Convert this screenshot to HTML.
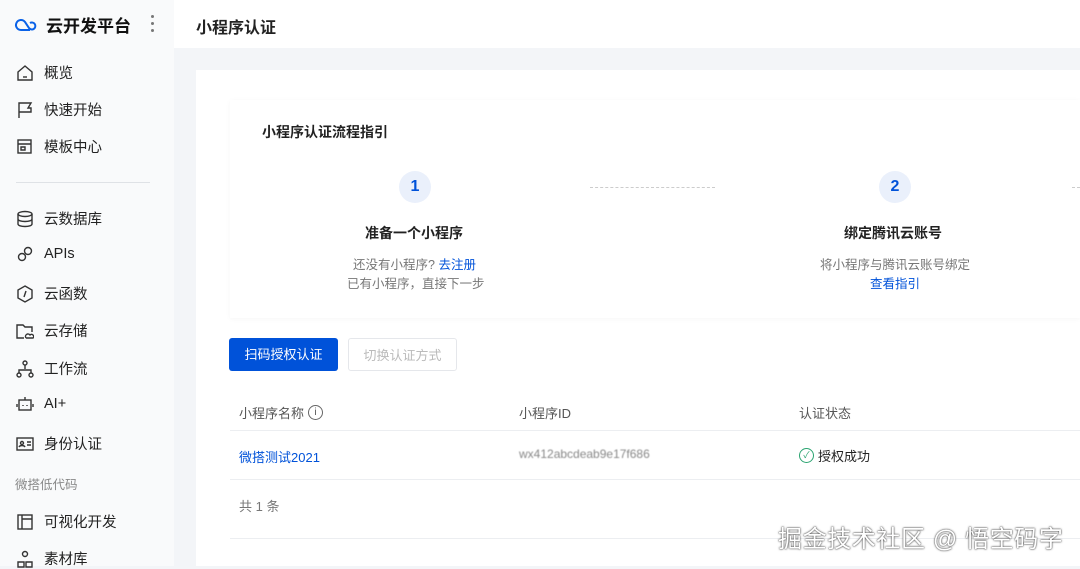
<!DOCTYPE html>
<html><head><meta charset="utf-8"><style>
*{margin:0;padding:0;box-sizing:border-box}
body{width:1080px;height:566px;overflow:hidden;font-family:"Liberation Sans","Noto Sans CJK SC",sans-serif;background:#f3f5f8;position:relative;color:#222}
.side{position:absolute;left:0;top:0;width:174px;height:566px;background:#f9fafb}
.logo{position:absolute;left:14px;top:12px;font-size:17px;font-weight:bold;color:#111;display:flex;align-items:center;gap:8px}
.dots{position:absolute;left:151px;top:15px;width:4px}
.dots i{display:block;width:3px;height:3px;background:#777;border-radius:50%;margin-bottom:4px}
.item{position:absolute;left:16px;font-size:14.5px;color:#222;display:flex;align-items:center;gap:10px}
.item svg{width:18px;height:18px;stroke:#333;fill:none;stroke-width:1.4}
.hr{position:absolute;left:16px;top:182px;width:134px;height:1px;background:#dfe2e6}
.grp{position:absolute;left:15px;top:474px;font-size:12.5px;color:#888}
.top{position:absolute;left:174px;top:0;width:906px;height:48px;background:#fff}
.top span{position:absolute;left:22px;top:14px;font-size:16px;font-weight:bold}
.card{position:absolute;left:196px;top:70px;width:884px;height:496px;background:#fff}
.steps{position:absolute;left:230px;top:100px;width:850px;height:218px;background:#fff;box-shadow:0 1px 5px rgba(0,0,0,.04)}
.t{position:absolute;font-size:14px}
.circ{position:absolute;width:32px;height:32px;border-radius:50%;background:#eaf0fb;color:#0052d9;font-size:16px;font-weight:bold;text-align:center;line-height:32px}
.dash{position:absolute;top:187px;height:0;border-top:1px dashed #ccc}
.btn{position:absolute;top:338px;height:33px;font-size:13px;line-height:33px;text-align:center;border-radius:3px}
.th{position:absolute;top:403px;font-size:13px;color:#555;display:flex;align-items:center;gap:4px}
.line{position:absolute;left:230px;width:850px;height:1px;background:#eceef1}
</style></head><body>
<div class="side">
<div class="logo"><svg width="24" height="16" viewBox="0 0 24 16" fill="none" stroke="#0a62e8" stroke-width="2"><path d="M7 13a5 5 0 1 1 4-8l4 6a3.5 3.5 0 1 0 1-5"/><path d="M7 13h9"/></svg>云开发平台</div>
<div class="dots"><i></i><i></i><i></i></div>
<div class="item" style="top:62px"><svg viewBox="0 0 18 18"><path d="M2 8l7-6 7 6v8H2z"/><path d="M7 13h4"/></svg>概览</div>
<div class="item" style="top:99px"><svg viewBox="0 0 18 18"><path d="M3 17V2h12l-3 5h3v4H3"/></svg>快速开始</div>
<div class="item" style="top:136px"><svg viewBox="0 0 18 18"><rect x="2" y="2" width="13" height="13"/><path d="M2 6h13M5 9h4v3H5z"/></svg>模板中心</div>
<div class="hr"></div>
<div class="item" style="top:208px"><svg viewBox="0 0 18 18"><ellipse cx="9" cy="4" rx="7" ry="2.5"/><path d="M2 4v10c0 1.5 3 2.5 7 2.5s7-1 7-2.5V4M2 9c0 1.5 3 2.5 7 2.5s7-1 7-2.5"/></svg>云数据库</div>
<div class="item" style="top:245px"><svg viewBox="0 0 18 18"><circle cx="6" cy="12" r="3.5"/><circle cx="12" cy="6" r="3.5"/></svg>APIs</div>
<div class="item" style="top:283px"><svg viewBox="0 0 18 18"><path d="M9 1l7 4v8l-7 4-7-4V5z"/><path d="M10 6l-2 6"/></svg>云函数</div>
<div class="item" style="top:320px"><svg viewBox="0 0 18 18"><path d="M8 16H1V3h6l2 2h7v5"/><path d="M10 16h7a2 2 0 0 0-3-3 2 2 0 0 0-4 3"/></svg>云存储</div>
<div class="item" style="top:358px"><svg viewBox="0 0 18 18"><circle cx="9" cy="3" r="2"/><circle cx="3" cy="15" r="2"/><circle cx="15" cy="15" r="2"/><path d="M9 5v4M3 13v-3h12v3"/></svg>工作流</div>
<div class="item" style="top:395px"><svg viewBox="0 0 18 18"><rect x="3" y="5" width="12" height="10"/><path d="M9 2v3M1 9v3M17 9v3M7 10v1M11 10v1"/></svg>AI+</div>
<div class="item" style="top:433px"><svg viewBox="0 0 18 18"><rect x="1" y="3" width="16" height="12"/><circle cx="6" cy="8" r="1.5"/><path d="M3 12c1-2 5-2 6 0M11 7h4M11 10h4"/></svg>身份认证</div>
<div class="grp">微搭低代码</div>
<div class="item" style="top:511px"><svg viewBox="0 0 18 18"><rect x="2" y="2" width="14" height="14"/><path d="M6 2v14M6 6h10"/></svg>可视化开发</div>
<div class="item" style="top:548px"><svg viewBox="0 0 18 18"><circle cx="9" cy="4" r="2.5"/><path d="M2 17v-5h6v5zM10 17v-5h6v5z"/></svg>素材库</div>
</div>
<div class="top"><span>小程序认证</span></div>
<div class="card"></div>
<div class="steps"></div>
<div class="t" style="left:262px;top:122px;font-weight:bold">小程序认证流程指引</div>
<div class="circ" style="left:399px;top:171px">1</div>
<div class="circ" style="left:879px;top:171px">2</div>
<div class="dash" style="left:590px;width:125px"></div>
<div class="dash" style="left:1072px;width:8px"></div>
<div class="t" style="left:365px;top:223px;font-weight:bold">准备一个小程序</div>
<div class="t" style="left:844px;top:223px;font-weight:bold">绑定腾讯云账号</div>
<div class="t" style="left:353px;top:254px;font-size:12.5px;color:#777">还没有小程序? <span style="color:#0052d9">去注册</span></div>
<div class="t" style="left:347px;top:273px;font-size:12.5px;color:#777">已有小程序，直接下一步</div>
<div class="t" style="left:820px;top:254px;font-size:12.5px;color:#777">将小程序与腾讯云账号绑定</div>
<div class="t" style="left:870px;top:273px;font-size:12.5px;color:#0052d9">查看指引</div>
<div class="btn" style="left:229px;width:109px;background:#0052d9;color:#fff">扫码授权认证</div>
<div class="btn" style="left:348px;width:109px;border:1px solid #e5e7eb;color:#bbb">切换认证方式</div>
<div class="th" style="left:239px">小程序名称 <span style="display:inline-block;width:15px;height:15px;border:1px solid #666;border-radius:50%;font-size:10px;text-align:center;line-height:13px">i</span></div>
<div class="th" style="left:519px">小程序ID</div>
<div class="th" style="left:799px">认证状态</div>
<div class="line" style="top:430px"></div>
<div class="t" style="left:239px;top:447px;font-size:13px;color:#0052d9">微搭测试2021</div>
<div class="t" style="left:519px;top:447px;font-size:12px;color:#888;filter:blur(.6px)">wx412abcdeab9e17f686</div>
<div class="t" style="left:799px;top:446px;font-size:13px;display:flex;align-items:center;gap:4px"><span style="display:inline-block;width:15px;height:15px;border:1.3px solid #2ba471;border-radius:50%;color:#2ba471;font-size:9px;text-align:center;line-height:13px">✓</span>授权成功</div>
<div class="line" style="top:479px"></div>
<div class="t" style="left:239px;top:496px;font-size:13px;color:#777">共 1 条</div>
<div class="line" style="top:538px"></div>
<div class="t" style="left:778px;top:519px;font-size:24px;letter-spacing:0.6px;color:#fff;text-shadow:0 0 2px #444,0 0 1px #444">掘金技术社区 @ 悟空码字</div>
</body></html>
